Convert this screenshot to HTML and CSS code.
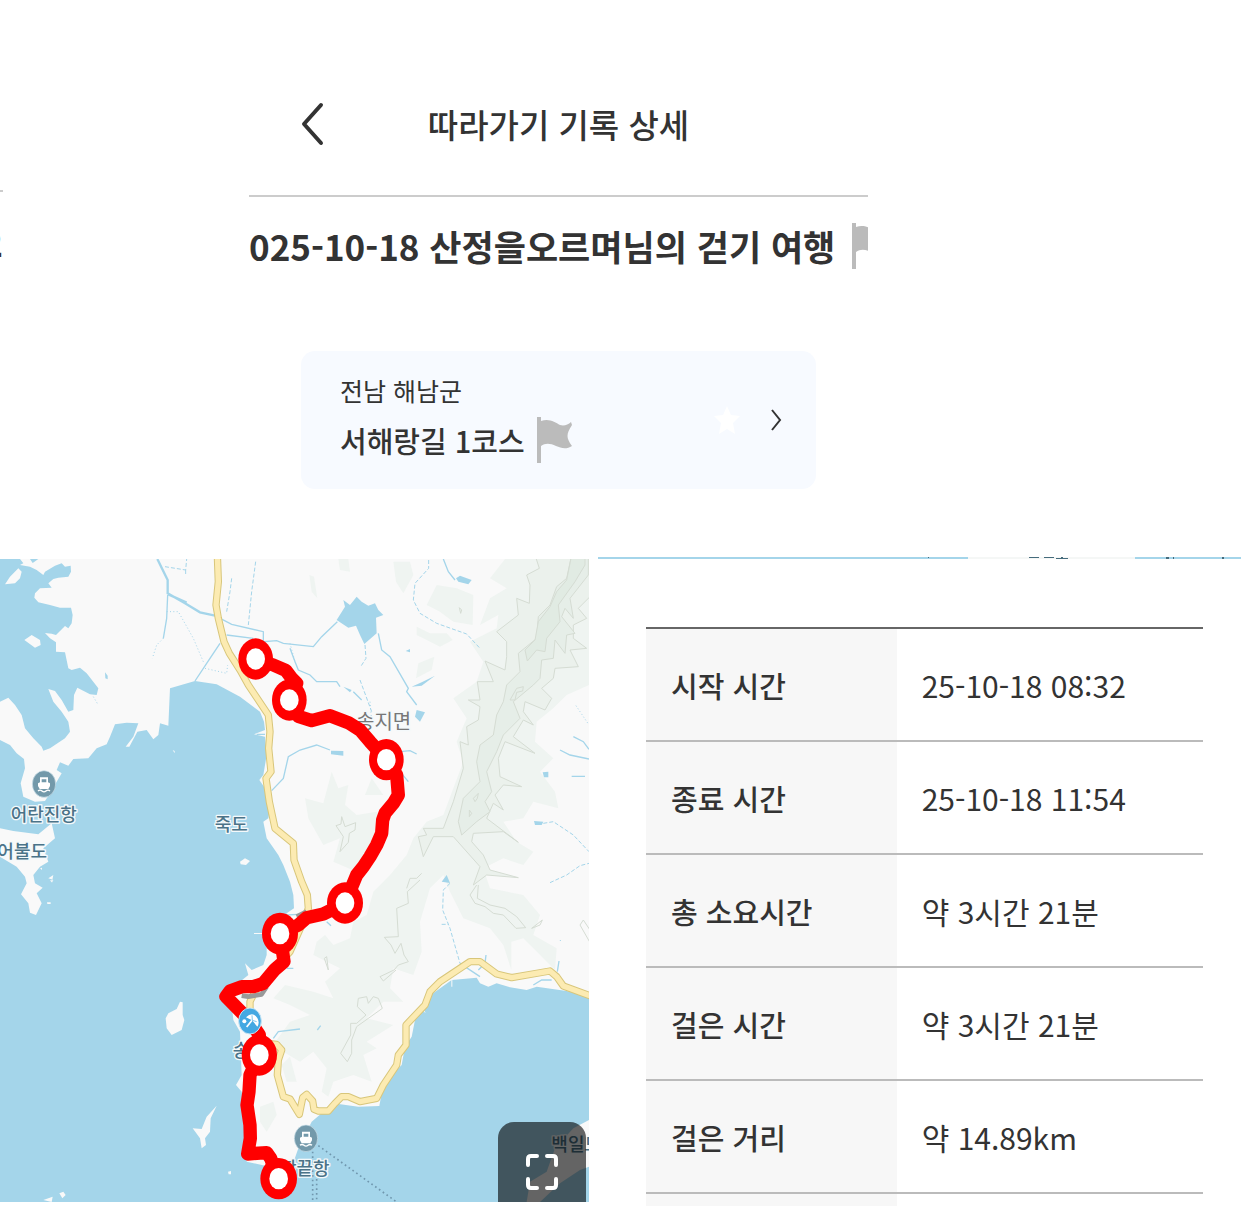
FILE: index.html
```html
<!DOCTYPE html>
<html lang="ko">
<head>
    <meta charset="UTF-8">
    <meta name="viewport" content="width=device-width, initial-scale=1.0">
    <title>따라가기 기록 상세</title>
    <link rel="stylesheet" href="styles.css">
</head>
<body>

    <div class="top">
        <div class="previous">
            <div class="previous-line"></div>
            <p class="previous-text">2</p>
        </div>

        <div class="record">
            <header class="header">
                <button class="back-btn" aria-label="뒤로">
                    <svg width="24" height="44" viewBox="0 0 24 44"><path d="M20 3L3 22L20 41" fill="none" stroke="#333" stroke-width="4" stroke-linecap="round" stroke-linejoin="round"/></svg>
                </button>
                <h1>따라가기 기록 상세</h1>
            </header>

            <div class="record-title">
                <h2>025-10-18 산정을오르며님의 걷기 여행</h2>
                <svg class="flag" viewBox="0 0 36 46"><path d="M0 0H4V4C12 1 18 5 23 8C27 9 31 8 34 5L35 8C29 17 29 21 35 29C29 33 24 31 19 29C13 26 8 26 4 29V46H0Z"/></svg>
            </div>

            <section class="course">
                <a class="course-link" href="#course">
                    <span class="region">전남 해남군</span>
                    <span class="course-name">서해랑길 1코스
                        <svg class="flag" viewBox="0 0 36 46"><path d="M0 0H4V4C12 1 18 5 23 8C27 9 31 8 34 5L35 8C29 17 29 21 35 29C29 33 24 31 19 29C13 26 8 26 4 29V46H0Z"/></svg>
                    </span>
                </a>
                <button class="star-btn" aria-label="즐겨찾기">
                    <svg width="28" height="30" viewBox="0 0 28 30"><path d="M14 1L18 10L27 11L20 18L22 29L14 24L6 29L8 18L1 11L10 10Z" fill="#fff"/></svg>
                </button>
                <button class="next-btn" aria-label="코스 보기">
                    <svg width="12" height="22" viewBox="0 0 12 22"><path d="M2 1L10 11L2 21" fill="none" stroke="#333" stroke-width="2"/></svg>
                </button>
            </section>
        </div>
    </div>

    <main class="detail">
        <div class="map">
            <svg class="map-svg" viewBox="0 12 1767 1929" role="img" aria-label="걷기 경로 지도">
                <rect y="12" width="1767" height="1929" fill="#f9f9f9"/>

                <!-- forest -->
                <g transform="translate(870)" fill="#eff4f1">
                    <path d="M645 12H897V390L830 420L790 460L740 500L735 560L790 610L750 650L795 710L805 760L730 740L700 790L640 800L680 860L730 890L700 930L640 910L580 940L600 1000L700 1020L750 1080L730 1140L800 1180L795 1245L700 1150L664 1160V1245L640 1170L600 1120L520 1090L480 1010L460 960L420 1000L390 1100L395 1190L370 1260L310 1240L300 1300L340 1340L280 1340L230 1390L310 1410L230 1460L260 1480L220 1500L245 1580L190 1560L130 1580L115 1625L95 1610L110 1540L70 1490L30 1520L-20 1490L-40 1455L0 1400L60 1380L0 1350L-50 1330L-15 1290L70 1310L130 1330L105 1280L150 1240L70 1200L80 1160L105 1140L130 1170L180 1150L190 1100L230 1080L250 1010L300 960L350 900L370 850L410 800L460 780L490 700L520 620L500 560L530 490L490 430L560 380L580 320L540 260L620 220L625 180L570 210L600 130L650 100L600 70Z"/>
                    <path d="M410 150L440 90L500 100L550 120L548 210L490 200L450 170ZM310 20H360L370 60L340 115L318 80ZM145 12H175L180 50L150 45ZM58 60L72 65L82 130L65 110ZM380 215L420 235L470 235L488 255L450 275L380 240ZM385 325L433 305L425 345L378 370ZM45 730L100 745L125 650L145 700L175 690L165 750L200 780L260 770L290 820L260 880L200 950L130 920L150 850L100 870L55 790ZM225 720L245 670L280 720Z"/>
                </g>
                <path d="M845 1530L870 1505L890 1580L860 1580ZM780 1655L820 1640L830 1680L800 1730L780 1700Z" fill="#eff4f1"/>

                <!-- ridge contours -->
                <g transform="translate(870)" fill="#ebf1ec" stroke="#d5dcd3" stroke-width="3">
                    <path d="M735 0L748 40L710 60L720 90L718 145L680 130L685 180L620 230L650 260L650 305L645 345L585 318L610 380L562 380L570 435L535 435L570 455L565 495L530 515L535 570L510 560L520 640L490 740L460 820L400 820L410 840L385 845L400 905L430 845L490 845L570 935L550 990L590 960L685 968L600 945L580 900L545 860L550 835L640 830L685 862L590 790L610 745L640 765L615 720L640 690L695 695L630 665L625 610L645 560L735 595L670 545L700 495L730 510L700 470L705 440L765 465L785 430L755 400L790 370L795 340L865 335L840 285L890 280L850 250L850 210L890 190L865 160L910 115V0Z"/>
                    <path fill="#e6eee8" d="M845 0L830 70L800 95L780 150L745 185L740 250L685 295L690 350L650 390L640 440L620 480L610 540L570 570L560 620L570 680L520 730L505 800L515 840L560 800L600 770L585 740L605 710L590 650L620 590L640 540L690 490L670 440L730 390L750 370L755 315L790 310L795 255L825 295L830 240L855 235L815 185L825 160L850 190L840 130L895 60V0Z"/>
                    <path fill="#e1ebe3" d="M845 0L830 75L800 110L780 155L745 200L735 255L705 285L712 318L740 285L765 290L770 250L810 200L805 150L855 80L885 30V0Z"/>
                    <path fill="none" d="M660 435L680 400L700 395L698 408L680 412L675 435ZM550 730L565 715L562 730L555 740ZM538 765L545 775L538 785ZM508 158L515 165L512 175ZM155 785L165 815L197 803L195 825L178 835L175 862L150 890L160 845L138 812L153 807ZM350 1000L360 970L380 970L395 955M390 975L352 1010L355 1045L320 1060L325 1145L283 1147L303 1170L315 1195L333 1165L342 1200L355 1220L325 1230L312 1245L270 1265L280 1278L318 1245M103 1210L110 1205L115 1245ZM205 1330L230 1325L235 1345L250 1325L265 1330L277 1360L200 1415L185 1455L185 1495L172 1520L152 1495L182 1440L182 1405L200 1405L228 1380L202 1355ZM560 990L540 1020L555 1045L585 1055L610 1075L640 1080L678 1120L707 1118L680 1085L645 1060L600 1050L562 1030L565 990M725 1120L757 1095L750 1110ZM910 1180L870 1110L880 1095L910 1140"/>
                </g>

                <!-- sea -->
                <g fill="#a4d5ea">
                    <path d="M0 12H60L70 25L60 30L90 35L110 45L130 60L135 50L165 32L185 25L195 35L212 32L213 50L205 65L175 68L160 72L145 85L155 98L120 100L105 115L103 128L115 142L150 150L180 158L213 158L218 180L215 205L205 220L195 213L180 228L168 240L155 236L135 234L150 250L168 262V290L195 292L205 340L215 345L240 338L260 355L295 400L290 420L270 418L232 398L222 420L220 465L205 470L185 435L165 408L145 402L160 440L185 470L205 500L210 530L195 550L150 580L130 587L125 575L100 550L75 520L65 480L45 450L25 428L0 440ZM90 12L98 24L115 12Z"/>
                    <path d="M0 555L30 570L50 595L72 612L75 640L62 685L70 725L105 740L135 738L150 715L170 680L185 655L170 645L180 622L205 632L220 612L265 610L290 580L320 568L330 545L345 508L380 503L415 505L400 545L377 575L388 575L412 530L440 525L460 553L475 540L480 505L505 512L510 400L585 378L650 388L720 425L780 470L792 500L795 525L762 538L795 545L800 600L790 660L778 675L795 700L810 760L805 790L790 800L800 850L835 900L850 930L870 980L880 1020L882 1060L860 1075L840 1130L800 1170V1200L790 1230L755 1245L735 1225L745 1260L720 1280L690 1300L700 1395L720 1430L725 1560L708 1590L725 1610L740 1700V1820L830 1840L860 1880L895 1780L935 1700L1000 1645L1075 1655L1138 1653L1145 1615L1170 1565L1205 1530L1215 1475L1235 1445L1245 1395L1270 1360L1285 1325L1355 1275L1430 1268L1440 1285L1465 1295L1490 1285L1530 1297L1580 1305L1610 1295L1700 1308L1767 1325V1941H0Z"/>
                    <path d="M1010 195L1035 155L1030 135L1050 150L1070 125L1085 140L1105 152L1125 145L1135 165L1150 180L1128 188L1130 235L1093 267L1080 240L1068 212L1045 218ZM1368 70L1380 62L1415 75L1405 88L1375 80ZM1245 485L1250 465L1275 472L1260 500ZM1235 395L1265 382L1305 362L1265 392ZM993 587L1030 588V602L993 598ZM1325 980L1340 960L1350 984ZM1628 652L1645 650V667L1632 667ZM1602 798L1630 800L1625 810L1605 810ZM315 352L323 362V373L316 370ZM1030 395L1055 405L1050 412ZM1217 288L1230 282V292Z"/>
                </g>

                <!-- islands -->
                <g fill="#f9f9f9">
                    <path d="M0 820L40 828L115 838L155 805L165 850L130 880L145 920L120 935L100 960L105 985L128 998L110 1015L125 1045L108 1080L90 1073L85 1045L63 1018L80 985L75 965L50 935L0 905ZM30 65L55 40L65 50L60 70L45 85L15 88ZM73 255L95 240L120 255L122 270L105 278ZM720 920L735 910L750 918L738 930L722 928ZM497 1390L505 1375L530 1362L540 1340L548 1342V1380L553 1395L545 1425L515 1440L500 1420ZM578 1720L605 1722L620 1685L650 1652L632 1690L630 1730L615 1750L618 1770L605 1780L600 1750ZM178 1915L190 1910L197 1920L187 1930ZM130 1935L158 1925L155 1941ZM684 1850L693 1848V1858H686ZM518 585L524 588V595ZM120 940L126 938V945ZM145 970L160 960L155 985L160 975ZM141 1042H152V1047H142ZM150 976H156V983Z"/>
                    <path d="M1580 1941L1590 1880L1640 1850L1665 1780L1720 1720L1767 1695V1835L1740 1845L1680 1885L1620 1941Z"/>
                    <path d="M1354 1270H1357V1295H1354ZM1270 1360L1277 1375L1272 1370ZM762 1134H790V1137H762Z"/>
                </g>

                <!-- streams -->
                <g fill="none" stroke="#a4d5ea" stroke-width="4">
                    <path stroke-width="7" d="M472 12L503 75V115L555 145L600 172L645 182M505 118L560 143"/>
                    <path d="M645 182L695 208L790 230V260L830 257L850 265L940 275L965 245L1012 200M680 240L760 250M585 378L620 325L660 265M503 120L500 190L490 250M1135 235L1145 285L1170 305L1225 400L1220 410L1250 450M870 280L885 320L895 345L930 360L950 380L1010 380L1020 395M815 707L850 670L865 605L900 585L950 570L990 585M1060 410L1085 435M1330 12L1345 50L1365 75M1680 585L1710 600L1767 612M1720 545L1750 560L1767 583M1715 664H1755M1380 1225L1440 1265M1435 1245L1455 1225L1458 1200M1600 1290L1625 1275L1655 1275M1672 1250L1677 1218M820 1450L835 1430L900 1422M952 1425L962 1412M860 1080L895 1078M860 1240L880 1240M980 1100L993 1112M1200 590L1230 587L1250 597M1200 650L1225 680M770 538H795"/>
                    <path stroke-width="3" stroke-dasharray="12 6" d="M495 35L557 45L560 12M557 45V62M695 70L690 110L680 170M767 20L755 110L745 210M1286 15V40L1245 85L1240 135L1260 175L1310 205L1400 237L1440 280M1350 985L1330 1005L1328 1065L1350 1120L1380 1225M1325 1108H1345M1630 805L1660 800L1720 840L1767 890M1650 983L1700 960L1740 932L1767 925M1095 270L1098 310L1082 335M1080 375L1115 470"/>
                    <path stroke-width="3" stroke-dasharray="3 7" d="M490 250L470 270L457 310M500 170H535L580 250L612 325M615 340L680 355L683 330M280 425L293 447M870 265L885 320M1728 452L1767 510M1110 440L1115 500M1681 1155V1165"/>
                </g>

                <!-- roads -->
                <g fill="none" stroke-linejoin="round">
                    <g stroke="#d8c67a" stroke-width="22">
                        <path d="M652 0L655 80L648 150L655 190L672 260L688 295L720 345L745 390L805 480L810 530L806 580L813 650L798 670L808 740L825 820L880 865L882 915L905 980L922 1020L925 1060L910 1100L870 1190L770 1300L750 1340V1380"/>
                        <path d="M800 1465L830 1468L845 1485L835 1515L832 1560L850 1625L870 1632L898 1678L908 1628L920 1618L938 1638L942 1663L955 1668H985L1005 1645L1025 1625H1045L1080 1640L1130 1630L1150 1590L1190 1530L1195 1500L1218 1470V1410L1275 1350L1290 1310L1320 1280L1410 1220H1440L1490 1257L1535 1268L1650 1248L1670 1265L1690 1293L1780 1326"/>
                    </g>
                    <g stroke="#fcebb2" stroke-width="16">
                        <path d="M652 0L655 80L648 150L655 190L672 260L688 295L720 345L745 390L805 480L810 530L806 580L813 650L798 670L808 740L825 820L880 865L882 915L905 980L922 1020L925 1060L910 1100L870 1190L770 1300L750 1340V1380"/>
                        <path d="M800 1465L830 1468L845 1485L835 1515L832 1560L850 1625L870 1632L898 1678L908 1628L920 1618L938 1638L942 1663L955 1668H985L1005 1645L1025 1625H1045L1080 1640L1130 1630L1150 1590L1190 1530L1195 1500L1218 1470V1410L1275 1350L1290 1310L1320 1280L1410 1220H1440L1490 1257L1535 1268L1650 1248L1670 1265L1690 1293L1780 1326"/>
                    </g>
                    <path d="M890 1085L920 1070M725 1322L745 1325L785 1318L800 1295" stroke="#999" stroke-width="14"/>
                </g>

                <!-- ferry lines -->
                <path d="M955 1772L1190 1941M938 1790V1941M950 1830V1941" fill="none" stroke="#7097ae" stroke-width="5" stroke-dasharray="5 9"/>

                <!-- place names -->
                <g class="place">
                    <text x="32" y="797">어란진항</text>
                    <text x="-8" y="909">어불도</text>
                    <text x="644" y="827">죽도</text>
                    <text x="698" y="1507">송호</text>
                    <text x="840" y="1860">땅끝항</text>
                    <text x="1654" y="1789">백일도</text>
                </g>
                <text class="place town" x="1068" y="522">송지면</text>

                <!-- harbours -->
                <g id="harbour" transform="translate(132 687)">
                    <ellipse rx="35" ry="40" fill="#7399aa" stroke="#cfe3ec" stroke-width="2"/>
                    <path fill="#fff" fill-rule="evenodd" d="M-12 -20H12V-5L18 -2V6L13 15H-13L-18 6V-2L-12 -5ZM-7 -14V-5H7V-14Z"/>
                    <path d="M-18 21Q-12 16 -6 21T6 21T18 21" fill="none" stroke="#fff" stroke-width="4"/>
                </g>
                <use href="#harbour" x="786" y="1063"/>

                <!-- walked route -->
                <path d="M767 313L820 330L857 346L875 370L890 385L868 435L895 484L935 497L990 482L1045 503L1080 525L1110 560L1158 613L1190 660L1195 720L1180 745L1155 775L1148 795L1145 835L1130 870L1110 905L1090 935L1070 960L1035 1045L970 1077L920 1088L895 1110L840 1136L852 1220L825 1243L790 1285L760 1295L725 1295L690 1308L678 1325L750 1398L778 1440V1500L750 1560L747 1610L741 1650L750 1710L751 1750L743 1797L800 1793L812 1810L835 1872" fill="none" stroke="#f00" stroke-width="40" stroke-linejoin="round" stroke-linecap="round"/>
                <g fill="#f00">
                    <ellipse cx="767" cy="312" rx="52" ry="62"/>
                    <ellipse cx="868" cy="435" rx="52" ry="62"/>
                    <ellipse cx="1159" cy="614" rx="52" ry="62"/>
                    <ellipse cx="1035" cy="1044" rx="54" ry="62"/>
                    <ellipse cx="840" cy="1136" rx="54" ry="63"/>
                    <ellipse cx="778" cy="1500" rx="53" ry="62"/>
                    <ellipse cx="836" cy="1871" rx="55" ry="62"/>
                </g>
                <g fill="#fff">
                    <ellipse cx="767" cy="312" rx="28" ry="32"/>
                    <ellipse cx="868" cy="435" rx="28" ry="32"/>
                    <ellipse cx="1159" cy="614" rx="28" ry="32"/>
                    <ellipse cx="1035" cy="1044" rx="28" ry="32"/>
                    <ellipse cx="840" cy="1136" rx="28" ry="32"/>
                    <ellipse cx="778" cy="1500" rx="28" ry="32"/>
                    <ellipse cx="836" cy="1871" rx="28" ry="32"/>
                </g>

                <!-- beach -->
                <g transform="translate(750 1398)">
                    <ellipse rx="34" ry="39" fill="#43a8e2" stroke="#c5e4f4" stroke-width="3"/>
                    <path d="M-12 -11Q8 -30 22 -9Q30 5 22 17L6 -2Z" fill="#fff"/>
                    <path d="M6 -2L-10 18" stroke="#fff" stroke-width="5"/>
                    <path d="M7 -2L6 -17M7 -2L20 2" stroke="#43a8e2" stroke-width="2"/>
                    <circle cx="-17" cy="1" r="6" fill="#fff"/>
                </g>
            </svg>
            <button class="fullscreen-btn" aria-label="전체 화면">
                <svg width="32" height="36" viewBox="0 0 32 36"><path d="M2 11V5Q2 2 5 2H11M21 2H27Q30 2 30 5V11M30 25V31Q30 34 27 34H21M11 34H5Q2 34 2 31V25" fill="none" stroke="#fff" stroke-width="4" stroke-linecap="round"/></svg>
            </button>
        </div>

        <div class="stats">
            <div class="map-edge">
                <svg viewBox="0 0 643 2" preserveAspectRatio="none">
                    <path d="M0 0H370V2H0ZM537 0H643V2H537Z" fill="#a4d5ea"/>
                    <path d="M370 0H537V2H370Z" fill="#f5f7f6"/>
                    <path d="M431 0H441V1H431ZM446 0H456V1H446ZM458 1H470V2H458ZM463 0H465V1H463ZM568 0H571V2H568ZM575 0H576V2H575ZM330 0H331V1H330ZM624 0H626V2H624Z" fill="#456b7c"/>
                </svg>
            </div>
            <table>
                <tr>
                    <th scope="row">시작 시간</th>
                    <td>25-10-18 08:32</td>
                </tr>
                <tr>
                    <th scope="row">종료 시간</th>
                    <td>25-10-18 11:54</td>
                </tr>
                <tr>
                    <th scope="row">총 소요시간</th>
                    <td>약 3시간 21분</td>
                </tr>
                <tr>
                    <th scope="row">걸은 시간</th>
                    <td>약 3시간 21분</td>
                </tr>
                <tr>
                    <th scope="row">걸은 거리</th>
                    <td>약 14.89km</td>
                </tr>
            </table>
            <div class="table-more"></div>
        </div>
    </main>

</body>
</html>
```
FILE: styles.css
```css
* {
    box-sizing: border-box;
}

body {
    font-family: "Noto Sans CJK KR", sans-serif;
    color: #333;
    background: #fff;
    margin: 0;
}

h1, h2, p {
    margin: 0;
}

button {
    background: none;
    border: none;
    padding: 0;
    cursor: pointer;
}

svg {
    display: block;
}

.top {
    display: grid;
    grid-template-columns: 249fr 619fr 384fr;
}

/* edge of the screen before this one */
.previous {
    width: 3px;
    overflow: hidden;
}

.previous-line {
    height: 192px;
    border-bottom: 2px solid #ccc;
}

.previous-text {
    display: flex;
    justify-content: flex-end;
    padding-top: 24px;
    font-size: 35px;
    line-height: 52px;
    font-weight: 700;
}

.record {
    min-width: 0;
}

.header {
    display: grid;
    grid-template-columns: 1fr auto 1fr;
    align-items: center;
    height: 197px;
    padding: 53px 52px 0;
    border-bottom: 2px solid #ccc;
}

.header h1 {
    font-size: 33px;
    line-height: 48px;
    font-weight: 500;
}

.back-btn {
    justify-self: start;
}

.record-title {
    display: flex;
    align-items: center;
    gap: 17px;
    height: 98px;
    overflow: hidden;
    white-space: nowrap;
}

.record-title h2 {
    font-size: 35px;
    line-height: 52px;
    font-weight: 700;
}

.flag {
    width: 36px;
    height: 46px;
    flex: none;
    fill: #bbb;
}

.course {
    display: flex;
    align-items: center;
    margin: 56px 52px 68px;
    padding: 20px 34px 20px 39px;
    height: 138px;
    border-radius: 14px;
    background: #f7faff;
}

.course-link {
    flex: 1;
    color: #333;
    text-decoration: none;
}

.region {
    display: block;
    font-size: 25px;
    line-height: 40px;
}

.course-name {
    display: flex;
    align-items: center;
    gap: 12px;
    font-size: 29px;
    line-height: 60px;
    font-weight: 500;
}

.star-btn {
    margin-right: 29px;
}

.detail {
    display: grid;
    grid-template-columns: 589fr 663fr;
    align-items: start;
}

.map {
    position: relative;
    margin-top: 2px;
    overflow: hidden;
}

.map-svg {
    width: 100%;
    height: auto;
}

/* map units are a third of a pixel */
.place {
    font-size: 54px;
    font-weight: 500;
    fill: #4b7388;
    stroke: #f4f9fb;
    stroke-width: 8px;
    stroke-linejoin: round;
    paint-order: stroke;
}

.town {
    font-size: 60px;
    font-weight: 400;
    fill: #777;
}

.fullscreen-btn {
    position: absolute;
    right: 3px;
    bottom: 0;
    display: flex;
    justify-content: center;
    align-items: center;
    width: 88px;
    height: 80px;
    padding-top: 20px;
    border-radius: 16px 16px 0 0;
    background: rgba(0, 0, 0, 0.6);
}

.map-edge {
    margin: 0 11px 68px 9px;
}

.map-edge svg {
    width: 100%;
    height: 2px;
}

table {
    width: calc(100% - 106px);
    margin-left: 57px;
    border-collapse: separate;
    border-spacing: 0;
    border-top: 2px solid #666;
    table-layout: fixed;
}

th, td {
    height: 113px;
    padding: 0 0 0 25px;
    border-bottom: 2px solid #bbb;
    line-height: 44px;
    text-align: left;
    white-space: nowrap;
}

th {
    width: 45%;
    background: #f7f7f7;
    font-size: 29px;
    font-weight: 500;
}

td {
    font-size: 30px;
    font-weight: 400;
}

.table-more {
    width: 251px;
    height: 12px;
    margin-left: 57px;
    background: #f7f7f7;
}

@media (max-width: 768px) {
    .top, .detail { grid-template-columns: 1fr; }
    .previous { display: none; }
}
```
